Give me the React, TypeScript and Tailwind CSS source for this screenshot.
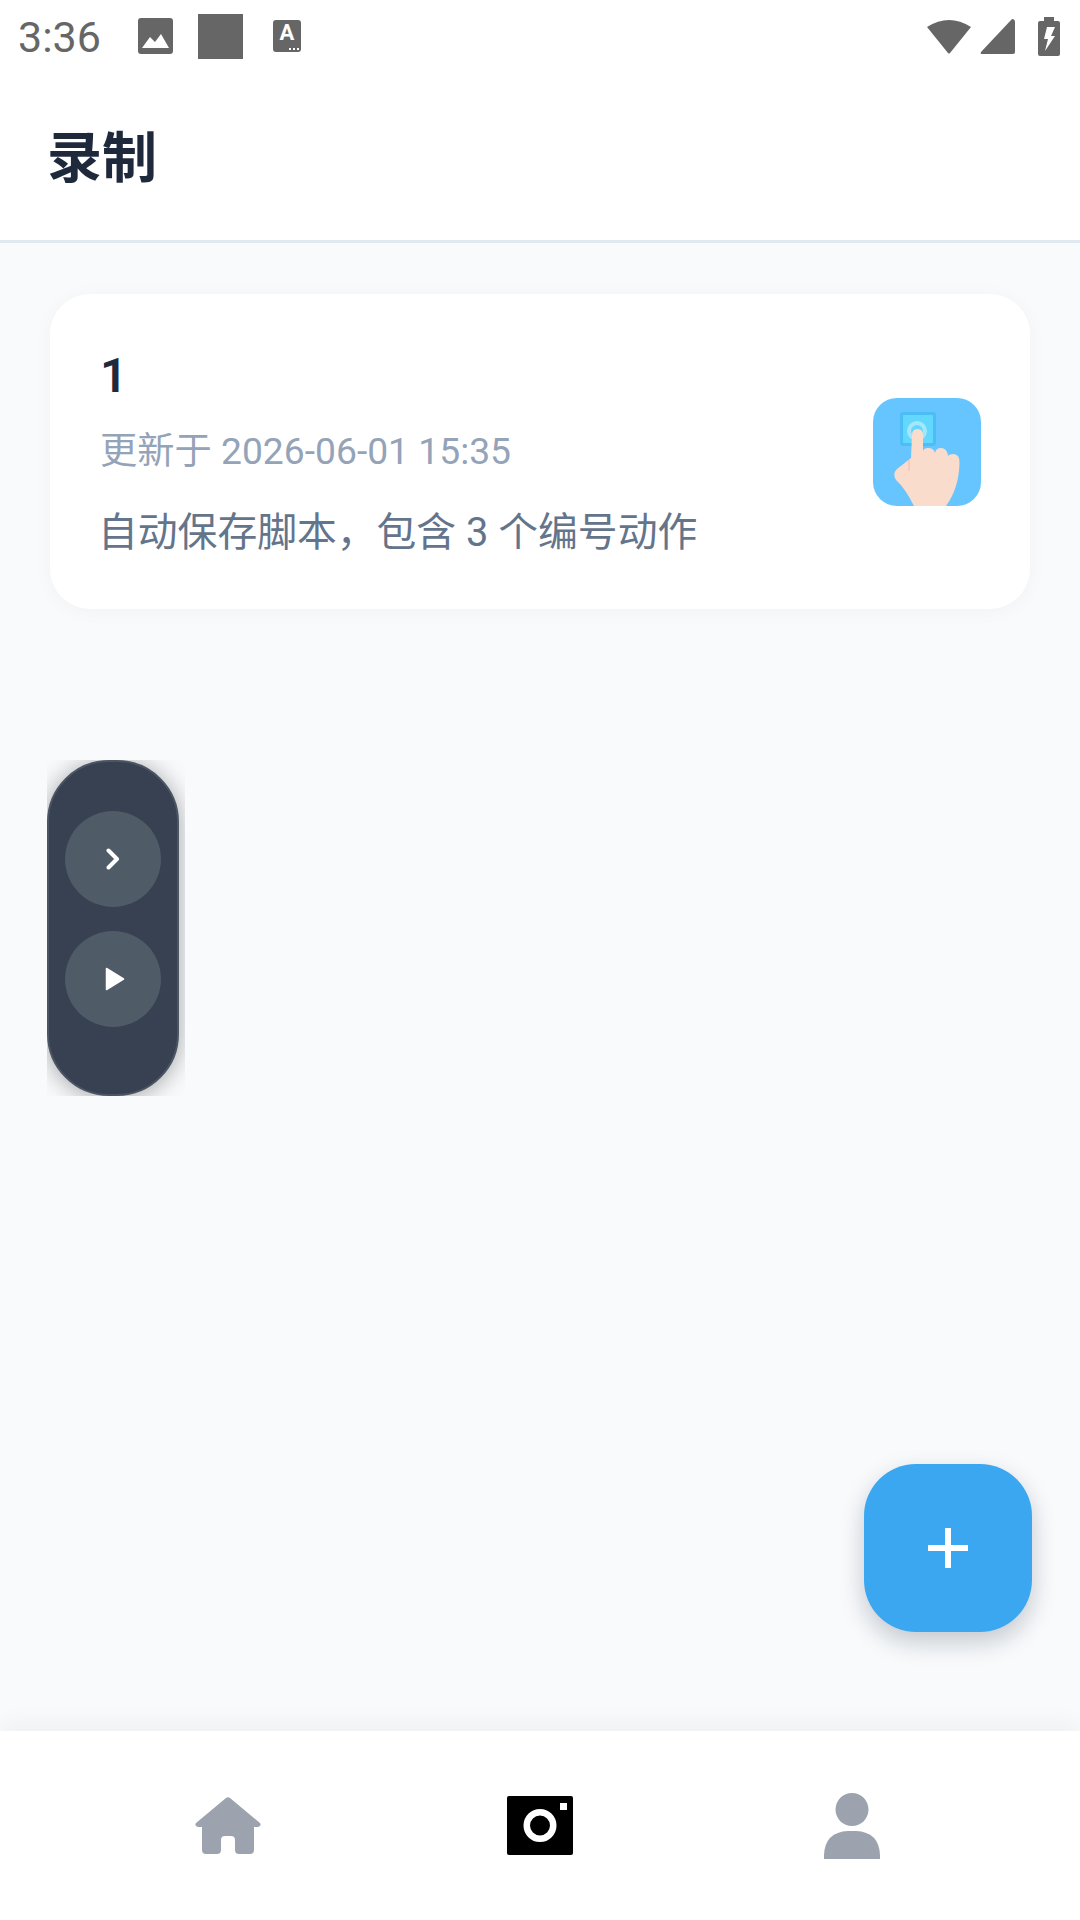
export default function App() {
  return (
    <div className="relative flex h-[1920px] w-[1080px] flex-col overflow-hidden bg-[#f8fafc] font-['Roboto','Noto_Sans_CJK_SC',sans-serif]">
      <header className="flex h-[243px] shrink-0 flex-col border-b-[3px] border-[#e2e8f0] bg-white">
        <div className="flex h-[72px] shrink-0 items-center pl-[18px] pr-[20px] text-[#666666]">
          <span className="mt-[3px] w-[120px] text-[43px] leading-none">3:36</span>
          <svg className="h-[36px] w-[35px]" viewBox="0 0 35 36">
            <rect x="0" y="0" width="35" height="36" rx="3" fill="#666666" />
            <path d="M4 30 L12 19 L17 24 L23 16 L31 30 Z" fill="#ffffff" />
          </svg>
          <div className="ml-[25px] h-[45px] w-[45px] bg-[#666666]" />
          <div className="relative ml-[30px] flex h-[32px] w-[28px] items-start justify-center rounded-[3px] bg-[#666666] text-[22px] font-bold leading-[26px] text-white">
            A
            <div className="absolute bottom-[2px] right-[2px] flex gap-[2px]">
              <div className="h-[2px] w-[2px] bg-white" />
              <div className="h-[2px] w-[2px] bg-white" />
              <div className="h-[2px] w-[2px] bg-white" />
            </div>
          </div>
          <div className="flex-1" />
          <svg className="h-[36px] w-[46px]" viewBox="0 0 46 36">
            <path d="M1 9 Q23 -5 45 9 L24 35 Q23 36 22 35 Z" fill="#666666" />
          </svg>
          <svg className="ml-[8px] h-[35px] w-[35px]" viewBox="0 0 35 35">
            <path d="M32 0 Q35 0 35 3 V33 Q35 35 33 35 H2 Q0 35 1 33 Z" fill="#666666" />
          </svg>
          <svg className="ml-[23px] h-[39px] w-[22px]" viewBox="0 0 22 39">
            <path d="M6 0 H16 V4 H20 Q22 4 22 6 V37 Q22 39 20 39 H2 Q0 39 0 37 V6 Q0 4 2 4 H6 Z" fill="#666666" />
            <path d="M9 10 H17 L13 19 H17 L7 34 L10 22 H6 Z" fill="#ffffff" />
          </svg>
        </div>
        <div className="flex flex-1 items-center pl-[47px]">
          <h1 className="mt-[5px] text-[55px] font-bold leading-none text-[#1e293b]">录制</h1>
        </div>
      </header>

      <main className="flex-1 px-[50px] pt-[51px]">
        <div className="flex h-[315px] items-center justify-between rounded-[40px] bg-white pl-[50px] pr-[49px] shadow-[0_2px_20px_rgba(15,23,42,0.035)]">
          <div className="flex flex-col pt-[4px]">
            <div className="text-[48px] font-semibold leading-[55px] text-[#1e293b]">1</div>
            <div className="mt-[27px] text-[37.25px] leading-[43px] text-[#94a3b8]">更新于 2026-06-01 15:35</div>
            <div className="-ml-[2px] mt-[34px] text-[39.8px] leading-[52px] text-[#64748b]">自动保存脚本，包含 3 个编号动作</div>
          </div>
          <svg className="h-[108px] w-[108px] shrink-0" viewBox="0 0 108 108">
            <defs>
              <clipPath id="tile">
                <rect width="108" height="108" rx="24" />
              </clipPath>
            </defs>
            <g clipPath="url(#tile)">
              <rect width="108" height="108" fill="#66c5ff" />
              <rect x="27" y="14" width="36" height="34" rx="3" fill="#4dbdf5" />
              <rect x="30" y="17" width="30" height="28" rx="1" fill="#62d8ff" />
              <circle cx="44" cy="33" r="10" fill="#a6e6fb" />
              <circle cx="44" cy="33" r="6" fill="#62d8ff" />
              <path
                d="M39 37 Q39 31 44.500 31 Q50 31 50 37 V53 Q51 49.500 56 50 Q61 50.500 62 55 Q63 50 68 50 Q74 50 75 58 Q76 56 81 56 Q87 57 86.500 65 Q86 90 73 108 H41 Q32 90 23 82 Q19 76 24 71 L38 60 Z"
                fill="#fadccd"
              />
              <path d="M36 62 L36 73" stroke="#f3b9a8" strokeWidth="1" fill="none" />
            </g>
          </svg>
        </div>
      </main>

      <nav className="relative grid h-[189px] shrink-0 grid-cols-3 bg-white px-[72px] shadow-[0_-10px_20px_rgba(15,23,42,0.035)]">
        <div className="flex items-start justify-center pt-[66px]">
          <svg className="h-[57px] w-[66px]" viewBox="0 0 66 57">
            <path
              d="M31 1 Q33 -0.500 35 1 L65 26 Q67 29 63 30 H59 V53 Q59 57 55 57 H44 Q40 57 40 53 V43 Q40 39 36 39 H30 Q26 39 26 43 V53 Q26 57 22 57 H11 Q7 57 7 53 V30 H3 Q-1 29 1 26 Z"
              fill="#9ca3af"
            />
          </svg>
        </div>
        <div className="flex items-start justify-center pt-[65px]">
          <svg className="h-[59px] w-[66px]" viewBox="0 0 66 59">
            <rect width="66" height="59" rx="2" fill="#000000" />
            <circle cx="33" cy="29.500" r="13.250" fill="none" stroke="#ffffff" strokeWidth="6.500" />
            <rect x="53" y="7" width="7" height="7" fill="#ffffff" />
          </svg>
        </div>
        <div className="flex items-start justify-center pt-[62px]">
          <svg className="h-[66px] w-[56px]" viewBox="0 0 56 66">
            <circle cx="28" cy="16.500" r="16.500" fill="#9ca3af" />
            <path d="M0 66 V62 Q1 39 24 38 H32 Q55 39 56 62 V66 Z" fill="#9ca3af" />
          </svg>
        </div>
      </nav>

      <div className="absolute left-[47px] top-[760px] h-[336px] w-[138px] overflow-hidden">
        <div className="flex h-full w-[132px] flex-col items-center gap-[24px] rounded-[62px] border-2 border-[#4b5563] bg-[#374151] pt-[49px] shadow-[0_2px_24px_rgba(0,0,0,0.35)]">
          <div className="flex h-[96px] w-[96px] items-center justify-center rounded-full bg-[#4f5b67]">
            <svg className="h-[22px] w-[14px]" viewBox="0 0 14 22">
              <path d="M2.500 2.500 L11 11 L2.500 19.500" fill="none" stroke="#ffffff" strokeWidth="4" strokeLinecap="round" strokeLinejoin="round" />
            </svg>
          </div>
          <div className="flex h-[96px] w-[96px] items-center justify-center rounded-full bg-[#4f5b67]">
            <svg className="ml-[4px] h-[24px] w-[20px]" viewBox="0 0 20 24">
              <path d="M1.500 1.500 L18.500 12 L1.500 22.500 Z" fill="#ffffff" stroke="#ffffff" strokeWidth="1.500" strokeLinejoin="round" />
            </svg>
          </div>
        </div>
      </div>

      <button className="absolute left-[864px] top-[1464px] flex h-[168px] w-[168px] items-center justify-center rounded-[52px] bg-[#3ba7f0] shadow-[0_10px_24px_rgba(15,23,42,0.22)]">
        <svg className="h-[40px] w-[40px]" viewBox="0 0 40 40">
          <path d="M17 0 H23 V17 H40 V23 H23 V40 H17 V23 H0 V17 H17 Z" fill="#ffffff" />
        </svg>
      </button>
    </div>
  );
}
